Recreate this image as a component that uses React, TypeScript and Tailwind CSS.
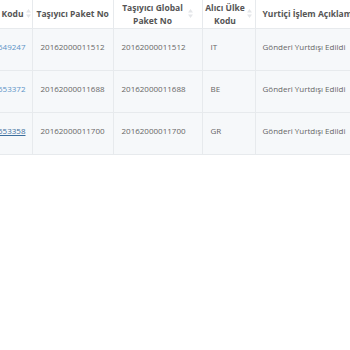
import React from "react";

interface Row {
  code: string;
  paketNo: string;
  globalNo: string;
  ulke: string;
  aciklama: string;
  hover?: boolean;
}

const rows: Row[] = [
  { code: "7016549247", paketNo: "20162000011512", globalNo: "20162000011512", ulke: "IT", aciklama: "Gönderi Yurtdışı Edildi" },
  { code: "7016553372", paketNo: "20162000011688", globalNo: "20162000011688", ulke: "BE", aciklama: "Gönderi Yurtdışı Edildi" },
  { code: "7016553358", paketNo: "20162000011700", globalNo: "20162000011700", ulke: "GR", aciklama: "Gönderi Yurtdışı Edildi", hover: true },
];

const SortIcon = () => (
  <svg width="5" height="9" viewBox="0 0 5 9" className="shrink-0">
    <path d="M2.5 0 L5 3.5 H0 Z" fill="#e4e6e9" />
    <path d="M2.5 9 L5 5.5 H0 Z" fill="#e4e6e9" />
  </svg>
);

export default function App() {
  return (
    <div className="w-[350px] h-[350px] bg-white overflow-hidden" style={{ fontFamily: '"Open Sans", sans-serif' }}>
      <table className="-ml-[30px] border-collapse table-fixed w-[420px]">
        <colgroup>
          <col className="w-[62px]" />
          <col className="w-[81px]" />
          <col className="w-[89px]" />
          <col className="w-[53px]" />
          <col className="w-[135px]" />
        </colgroup>
        <thead>
          <tr className="h-[28px] text-[8.5px] font-semibold text-[#555] leading-[13px] whitespace-nowrap">
            <th className="border-r border-b border-[#e7eaed] pl-1 pr-[1px]">
              <div className="flex items-center justify-end gap-[2px]">
                <span>Gönderi Kodu</span>
                <SortIcon />
              </div>
            </th>
            <th className="border-r border-b border-[#e7eaed] px-1 text-center">Taşıyıcı Paket No</th>
            <th className="border-r border-b border-[#e7eaed] px-1">
              <div className="flex items-center justify-center gap-[5px]">
                <span className="text-center">Taşıyıcı Global<br />Paket No</span>
                <SortIcon />
              </div>
            </th>
            <th className="border-r border-b border-[#e7eaed] px-1">
              <div className="flex items-center justify-center gap-[2px]">
                <span className="text-center">Alıcı Ülke<br />Kodu</span>
                <SortIcon />
              </div>
            </th>
            <th className="border-b border-[#e7eaed] px-[7px] text-left">Yurtiçi İşlem Açıklama</th>
          </tr>
        </thead>
        <tbody>
          {rows.map((r) => (
            <tr key={r.code} className="h-[42px] bg-[#f6f8fa] text-[8px] text-[#666]">
              <td className="border-r border-b border-[#e7eaed] px-[6px] pb-[4px] text-right">
                <span className={r.hover ? "text-[#3d6f9e] underline" : "text-[#5b93c7]"}>{r.code}</span>
              </td>
              <td className="border-r border-b border-[#e7eaed] px-[8px] pb-[4px]">{r.paketNo}</td>
              <td className="border-r border-b border-[#e7eaed] px-[8px] pb-[4px]">{r.globalNo}</td>
              <td className="border-r border-b border-[#e7eaed] px-[8px] pb-[4px]">{r.ulke}</td>
              <td className="border-b border-[#e7eaed] px-[7px] pb-[4px] whitespace-nowrap">{r.aciklama}</td>
            </tr>
          ))}
        </tbody>
      </table>
    </div>
  );
}
